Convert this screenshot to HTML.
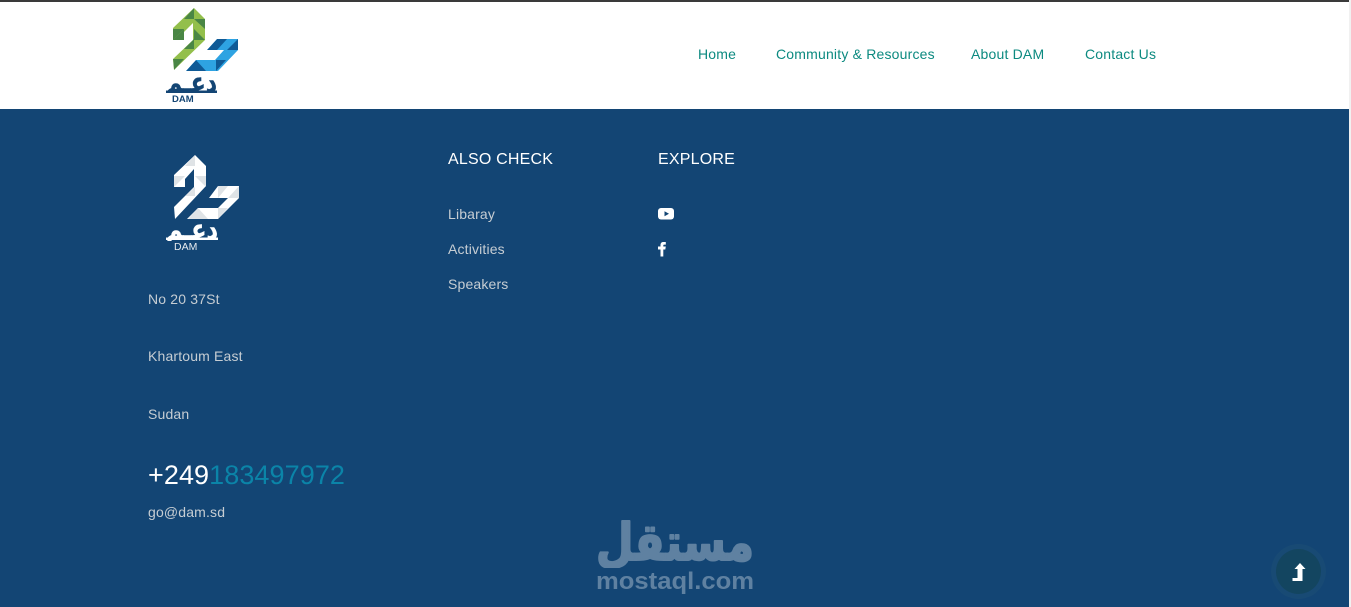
<!DOCTYPE html>
<html lang="en"><head><meta charset="utf-8"><title>DAM</title>
<style>
html,body{margin:0;padding:0;width:1351px;height:607px;overflow:hidden;background:#f1f1f1}
body{position:relative;font-family:"Liberation Sans",Arial,sans-serif}
#hd{position:absolute;left:0;top:0;width:1349px;height:109px;background:#fff;border-top:2px solid #3a3a3a;box-sizing:border-box}
#ft{position:absolute;left:0;top:109px;width:1349px;height:498px;background:#134574}
.t{position:absolute;white-space:nowrap;line-height:20px}
.n{font-size:14px;color:#0c8a80;top:44px;letter-spacing:.19px}
.l{font-size:14px;color:#c6cdd3;letter-spacing:.16px}
.h{font-size:16px;color:#fff;letter-spacing:.2px}
svg{position:absolute;overflow:visible}
</style></head><body>
<div id="hd"></div>
<div id="ft"></div>

<svg style="left:0;top:0" width="1351" height="607" viewBox="0 0 1351 607">
<defs>
<clipPath id="cg"><polygon points="173,28 194,8 205,19 205,40 174,70 173,59 193,40 193,23 184,32 184,40 173,40"/></clipPath>
<clipPath id="cb"><polygon points="217,39 238,39 238,50 218,71 186,71 196,60 215,60 224,50 207,50"/></clipPath>
<clipPath id="cw"><polygon points="174,175 195,155 206,166 206,186 175,219 174,207 194,187 194,169 185,179 185,187 174,187"/></clipPath>
<clipPath id="cx"><polygon points="218,186 239,186 239,198 218,219 187,219 198,208 218,208 228,198 209,198"/></clipPath>
<clipPath id="w1"><rect x="160" y="73" width="64" height="20"/></clipPath>
<clipPath id="w2"><rect x="160" y="221" width="64" height="20"/></clipPath>
<clipPath id="w3"><rect x="590" y="515" width="170" height="53"/></clipPath>
</defs>

<!-- header logo -->
<g clip-path="url(#cg)">
<rect x="170" y="5" width="40" height="70" fill="#93bf4c"/>
<g fill="#4a8645">
<polygon points="194,8 184,19 194,19"/>
<polygon points="194,19 205,19 205,29"/>
<polygon points="173,29 184,29 173,40"/>
<polygon points="173,40 184,29 184,40"/>
<polygon points="194,29 205,40 194,40"/>
<polygon points="184,49 194,39 194,49"/>
<polygon points="173,59 184,59 174,70"/>
</g>
</g>
<g clip-path="url(#cb)">
<rect x="183" y="35" width="58" height="38" fill="#2ea3e2"/>
<g fill="#0f5a96">
<polygon points="217,39 227,39 217,50"/>
<polygon points="207,50 217,39 217,50"/>
<polygon points="238,39 238,50 227,50"/>
<polygon points="196,60 206,71 186,71"/>
<polygon points="216,60 226,60 216,71"/>
</g>
</g>
<text x="166" y="92" clip-path="url(#w1)" font-family="'DejaVu Sans',sans-serif" font-weight="700" font-size="28" fill="#134574" stroke="#134574" stroke-width=".4" textLength="51" lengthAdjust="spacingAndGlyphs">دعـم</text>
<rect x="166" y="90.500" width="51" height="2.500" fill="#134574"/>
<text x="172" y="102" font-size="9.500" font-weight="700" fill="#134574" font-family="'Liberation Sans',sans-serif">DAM</text>

<!-- footer logo -->
<g clip-path="url(#cw)">
<rect x="170" y="150" width="40" height="75" fill="#fff"/>
<g fill="#dfe3e6">
<polygon points="195,155 185,166 195,166"/>
<polygon points="174,176 185,176 174,187"/>
<polygon points="195,176 206,176 206,187"/>
<polygon points="185,196 195,187 195,196"/>
</g>
</g>
<g clip-path="url(#cx)">
<rect x="185" y="183" width="58" height="38" fill="#fff"/>
<g fill="#dfe3e6">
<polygon points="218,186 228,186 218,198"/>
<polygon points="239,186 239,198 228,198"/>
<polygon points="198,208 208,219 188,219"/>
<polygon points="218,208 228,208 218,219"/>
</g>
</g>
<text x="166" y="239" clip-path="url(#w2)" font-family="'DejaVu Sans',sans-serif" font-weight="700" font-size="28" fill="#fff" stroke="#fff" stroke-width=".4" textLength="52" lengthAdjust="spacingAndGlyphs">دعـم</text>
<rect x="166" y="237.500" width="52" height="2.500" fill="#fff"/>
<text x="174" y="250" font-size="10.500" fill="#e6ebef" font-family="'Liberation Sans',sans-serif">DAM</text>

<!-- watermark -->
<text x="596" y="560" clip-path="url(#w3)" font-family="'DejaVu Sans',sans-serif" font-weight="700" font-size="51" fill="#5f81a1" stroke="#5f81a1" stroke-width="2" stroke-linejoin="round" textLength="158" lengthAdjust="spacingAndGlyphs">مستقل</text>
<text x="596" y="589" font-family="'Liberation Sans',sans-serif" font-weight="700" font-size="24" fill="#5f81a1" textLength="158" lengthAdjust="spacingAndGlyphs">mostaql.com</text>

<!-- youtube -->
<rect x="658" y="208" width="16" height="11.500" rx="3" fill="#fff"/>
<polygon points="664.500,211.300 669,213.800 664.500,216.300" fill="#134574"/>
<!-- facebook -->
<path d="M660.500 256.500V249.500H658V246.500H660.500V245C660.500 242.800 661.800 242 663.500 242H665.800V244.600H664.300C663.500 244.600 663.300 245 663.300 245.600V246.500H665.800L665.300 249.500H663.300V256.500Z" fill="#fff"/>

<!-- back to top -->
<circle cx="1298.500" cy="571.500" r="27.500" fill="#184a74"/>
<circle cx="1298.500" cy="571.500" r="22.500" fill="#134560"/>
<path d="M1300 563L1305.500 569H1302.500V581H1292.500V578H1297.500V569H1294.500Z" fill="#fff"/>
</svg>

<div class="t n" style="left:698px">Home</div>
<div class="t n" style="left:776px">Community &amp; Resources</div>
<div class="t n" style="left:971px">About DAM</div>
<div class="t n" style="left:1085px">Contact Us</div>

<div class="t h" style="left:448px;top:150px">ALSO CHECK</div>
<div class="t h" style="left:658px;top:150px">EXPLORE</div>
<div class="t l" style="left:448px;top:204px">Libaray</div>
<div class="t l" style="left:448px;top:239px">Activities</div>
<div class="t l" style="left:448px;top:274px">Speakers</div>

<div class="t l" style="left:148px;top:289px">No 20 37St</div>
<div class="t l" style="left:148px;top:346px">Khartoum East</div>
<div class="t l" style="left:148px;top:404px">Sudan</div>
<div class="t" style="left:148px;top:460px;font-size:27px;line-height:30px;letter-spacing:.08px;color:#0b84a8"><span style="color:#fff">+249</span>183497972</div>
<div class="t l" style="left:148px;top:502px">go@dam.sd</div>
</body></html>
